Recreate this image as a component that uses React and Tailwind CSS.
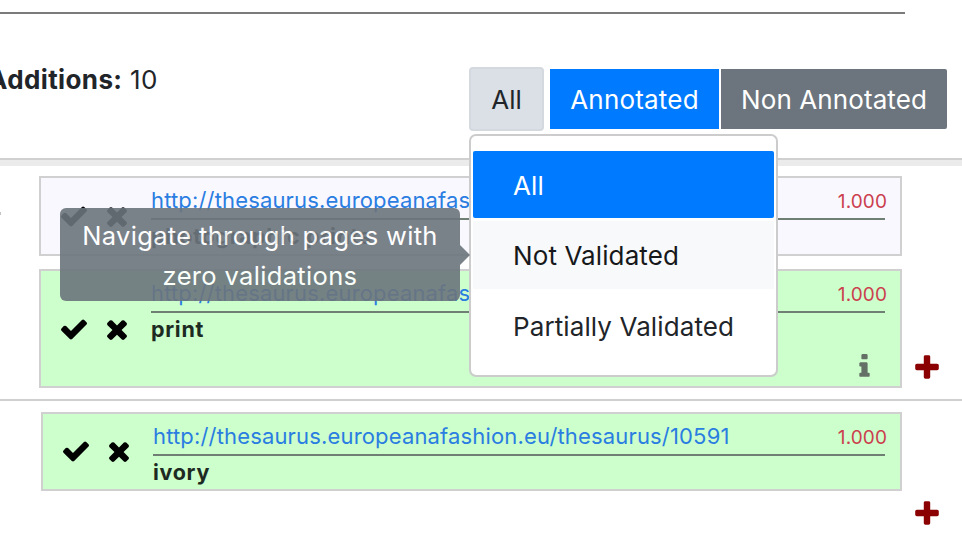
const FONT = 'font-[Inter,"Liberation_Sans",sans-serif]';

const PATHS = {
  check: 'M1671 566q0 40-28 68l-724 724-136 136q-28 28-68 28t-68-28l-136-136-362-362q-28-28-28-68t28-68l136-136q28-28 68-28t68 28l294 295 656-657q28-28 68-28t68 28l136 136q28 28 28 68z',
  times: 'M1490 1322q0 40-28 68l-136 136q-28 28-68 28t-68-28l-294-294-294 294q-28 28-68 28t-68-28l-136-136q-28-28-28-68t28-68l294-294-294-294q-28-28-28-68t28-68l136-136q28-28 68-28t68 28l294 294 294-294q28-28 68-28t68 28l136 136q28 28 28 68t-28 68l-294 294 294 294q28 28 28 68z',
  plus: 'M1600 736v192q0 40-28 68t-68 28h-416v416q0 40-28 68t-68 28h-192q-40 0-68-28t-28-68v-416h-416q-40 0-68-28t-28-68v-192q0-40 28-68t68-28h416v-416q0-40 28-68t68-28h192q40 0 68 28t28 68v416h416q40 0 68 28t28 68z',
  info: 'M1216 1344v128q0 26-19 45t-45 19h-512q-26 0-45-19t-19-45v-128q0-26 19-45t45-19h64v-384h-64q-26 0-45-19t-19-45v-128q0-26 19-45t45-19h384q26 0 45 19t19 45v576h64q26 0 45 19t19 45zm-128-1152v192q0 26-19 45t-45 19h-256q-26 0-45-19t-19-45v-192q0-26 19-45t45-19h256q26 0 45 19t19 45z',
};

function Icon({ name, size = 'size-[30px]' }) {
  return (
    <svg viewBox="0 0 1792 1792" fill="currentColor" className={`shrink-0 ${size}`}>
      <path d={PATHS[name]} />
    </svg>
  );
}

function Annotation({ url, label, score, className, iconClass, info }) {
  return (
    <div className={`flex border-2 border-[#d0d0d0] ${className}`}>
      <div className={`flex shrink-0 gap-[13px] pl-[18px] text-black ${iconClass}`}>
        <Icon name="check" />
        <Icon name="times" />
      </div>
      <div className="ml-[19px] mr-[15px] flex min-w-0 flex-1 flex-col">
        <div className="flex h-[42px] items-start justify-between border-b-2 border-[#6f7f73] pt-[8px] leading-[28px]">
          <a className="text-[22px] tracking-[0.16px] text-[#2a7de1]">{url}</a>
          <span className="-mr-[2px] pt-[2px] text-[19px] tracking-[0.1px] text-[#cb3f4e]">{score}</span>
        </div>
        <div className="pt-[2px] text-[21.5px] font-bold leading-[28px] tracking-[0.7px] text-[#1c2a22]">{label}</div>
        {info && (
          <div className="mt-[9px] flex justify-end pr-[6px] text-[#646f66]">
            <Icon name="info" size="size-[29px]" />
          </div>
        )}
      </div>
    </div>
  );
}

function FilterMenu() {
  return (
    <div className="absolute left-0 top-[67px] z-10 h-[243px] w-[309px] rounded-[7px] border-2 border-[#cccccc] bg-white bg-clip-padding px-[2px] pt-[15px] text-[26px] tracking-[0.1px] text-[#212529]">
      <div className="flex h-[67px] items-center rounded-[2px] bg-[#007bff] pl-[40px] pt-[2px] text-white">All</div>
      <div className="mt-[3px] flex h-[68px] items-center bg-[#f8f9fa] pl-[40px] text-[#16181b]">Not Validated</div>
      <div className="mt-[3px] flex h-[68px] items-center pl-[40px]">Partially Validated</div>
      <div className="absolute right-[306px] top-[72px] flex items-center opacity-90">
        <div className="h-[93px] w-[400px] rounded-[6px] bg-[#6c757d] pt-[8px] text-center text-[25.5px] leading-[40px] tracking-[0.34px] text-white">
          Navigate through pages with zero validations
        </div>
        <div className="h-0 w-0 border-y-[10px] border-l-[10px] border-y-transparent border-l-[#6c757d]" />
      </div>
    </div>
  );
}

export default function App() {
  return (
    <div className={`h-[544px] w-[962px] overflow-hidden bg-white ${FONT}`}>
      <header className="flex h-[158px] flex-col pt-[12px]">
        <div className="h-[2px] w-[905px] bg-[#7b7b7b]" />
        <div className="flex items-start justify-between pr-[15px] pt-[53px]">
          <div className="-ml-[12px] text-[26px] leading-[25px] tracking-[0.38px] text-[#212529]">
            <b>Additions:</b> 10
          </div>
          <div className="relative flex items-center text-[26px] text-white">
            <button className="h-[64px] w-[75px] rounded-[4px] border-2 border-[#d3d9df] bg-[#dae0e5] text-[#212529]">All</button>
            <button className="ml-[6px] h-[60px] w-[169px] bg-[#007bff] tracking-[0.2px]">Annotated</button>
            <button className="ml-[2px] h-[60px] w-[226px] rounded-r-[2px] bg-[#6c757d] tracking-[0.1px]">Non Annotated</button>
            <FilterMenu />
          </div>
        </div>
      </header>
      <main className="border-t-2 border-[#d0d0d0]">
        <div className="h-[6px] bg-[#ebebeb]" />
        <section className="flex h-[233px] pt-[10px]">
          <div className="mt-[36px] h-[3px] w-px bg-[#c4c4c4]" />
          <div className="ml-[38px] flex w-[863px] flex-col gap-[13px]">
            <Annotation url="http://thesaurus.europeanafashion.eu/thesaurus/10403" label="photographic prints" score="1.000" className="h-[80px] bg-[#f9f8ff]" iconClass="pt-[23px]" />
            <Annotation url="http://thesaurus.europeanafashion.eu/thesaurus/10403" label="print" score="1.000" className="h-[119px] bg-[#ccffcc]" iconClass="pt-[43px]" info />
          </div>
          <div className="flex flex-1 items-end pb-[16px] pl-[10px] text-[#8b0000]">
            <Icon name="plus" />
          </div>
        </section>
        <div className="h-[2px] bg-[#d0d0d0]" />
        <section className="flex h-[143px] pt-[11px]">
          <div className="ml-[41px] w-[861px]">
            <Annotation url="http://thesaurus.europeanafashion.eu/thesaurus/10591" label="ivory" score="1.000" className="h-[79px] bg-[#ccffcc]" iconClass="pt-[22px]" />
          </div>
          <div className="flex flex-1 items-end pb-[15px] pl-[10px] text-[#8b0000]">
            <Icon name="plus" />
          </div>
        </section>
      </main>
    </div>
  );
}
